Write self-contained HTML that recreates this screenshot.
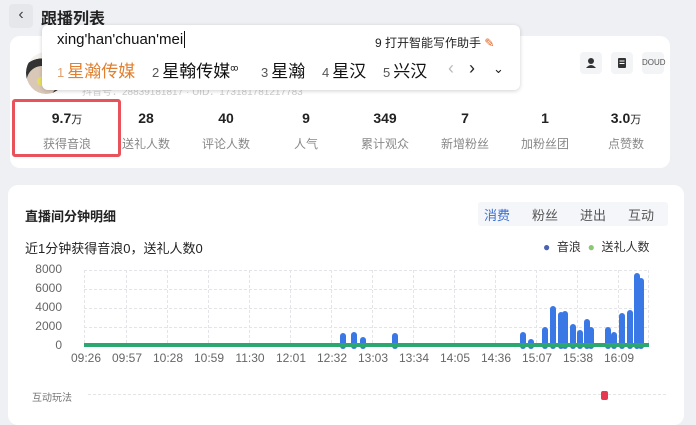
<!DOCTYPE html>
<html><head><meta charset="utf-8"><style>
*{margin:0;padding:0;box-sizing:border-box}
body{width:696px;height:418px;overflow:hidden;background:#eef0f4;font-family:"Liberation Sans","Noto Sans CJK SC",sans-serif;position:relative;color:#222}
.abs{position:absolute}
.card{background:#fff;border-radius:10px;position:absolute}
.stat{position:absolute;top:110px;width:80px;text-align:center}
.stat b{display:block;font-size:14px;font-weight:bold;color:#222;height:20px}
.stat b small{font-size:11px;font-weight:normal}
.stat span{display:block;font-size:12px;color:#888;margin-top:5px}
.ic{position:absolute;top:52px;width:22px;height:22px;background:#f3f4f6;border-radius:4px}
.xl{position:absolute;top:351px;font-size:12px;color:#666;width:40px;text-align:center}
.yl{position:absolute;left:24px;width:38px;text-align:right;font-size:12px;color:#666}
.cd{position:absolute;top:57px;font-size:17px;color:#111;white-space:nowrap}
.cd i{font-style:normal;font-size:13px;color:#555;margin-right:3px}
</style></head><body>
<div class="abs" style="left:9px;top:4px;width:24px;height:24px;background:#e5e7eb;border-radius:4px;font-size:16px;text-align:center;line-height:22px;color:#444">‹</div>
<div class="abs" style="left:41px;top:5px;font-size:16px;font-weight:bold;color:#222">跟播列表</div>

<div class="card" style="left:10px;top:36px;width:660px;height:132px"></div>
<div class="abs" style="left:26px;top:52px;width:40px;height:42px;border-radius:50%;background:radial-gradient(circle at 40% 70%,#e8e060 0 12%,#d9c8b8 13% 40%,#333 41% 60%,#f4f0ec 61%)"></div>
<div class="abs" style="left:82px;top:83px;font-size:10px;color:#ccc">抖音号：28839181817 · UID：173181781217783</div>
<div class="ic" style="left:580px"><svg width="22" height="22"><circle cx="11" cy="9" r="3" fill="#333"/><path d="M6 16q5-6 10 0z" fill="#333"/></svg></div>
<div class="ic" style="left:611px"><svg width="22" height="22"><rect x="7" y="6" width="8" height="10" rx="1" fill="#333"/><path d="M8.5 9h5M8.5 11.5h5" stroke="#fff"/></svg></div>
<div class="ic" style="left:642px;font-size:8px;line-height:22px;text-align:center;color:#555">DOUD</div>

<div class="abs" style="left:12px;top:99px;width:109px;height:58px;border:3px solid #e8525a;border-radius:3px"></div>
<div class="stat" style="left:27px"><b>9.7<small>万</small></b><span>获得音浪</span></div>
<div class="stat" style="left:106px"><b>28</b><span>送礼人数</span></div>
<div class="stat" style="left:186px"><b>40</b><span>评论人数</span></div>
<div class="stat" style="left:266px"><b>9</b><span>人气</span></div>
<div class="stat" style="left:345px"><b>349</b><span>累计观众</span></div>
<div class="stat" style="left:425px"><b>7</b><span>新增粉丝</span></div>
<div class="stat" style="left:505px"><b>1</b><span>加粉丝团</span></div>
<div class="stat" style="left:586px"><b>3.0<small>万</small></b><span>点赞数</span></div>

<div class="abs" style="left:42px;top:25px;width:478px;height:65px;background:#fff;border-radius:6px;box-shadow:0 1px 4px rgba(0,0,0,.18)"></div>
<div class="abs" style="left:57px;top:31px;font-size:15px;color:#111">xing'han'chuan'mei<span style="border-left:1px solid #111;margin-left:1px"></span></div>
<div class="abs" style="left:375px;top:34px;font-size:12px;color:#222">9 打开智能写作助手 <span style="color:#e06020">✎</span></div>
<div class="cd" style="left:57px;color:#e08030"><i style="color:#e0a070">1</i>星瀚传媒</div>
<div class="cd" style="left:152px"><i>2</i>星翰传媒<sup style="font-size:8px">ꝏ</sup></div>
<div class="cd" style="left:261px"><i>3</i>星瀚</div>
<div class="cd" style="left:322px"><i>4</i>星汉</div>
<div class="cd" style="left:383px"><i>5</i>兴汉</div>
<div class="abs" style="left:448px;top:58px;font-size:18px;color:#bbb">‹</div>
<div class="abs" style="left:469px;top:58px;font-size:18px;color:#222">›</div>
<div class="abs" style="left:493px;top:61px;font-size:13px;color:#222">⌄</div>

<div class="card" style="left:8px;top:185px;width:676px;height:240px"></div>
<div class="abs" style="left:25px;top:206px;font-size:13px;font-weight:bold;color:#222">直播间分钟明细</div>
<div class="abs" style="left:478px;top:202px;width:190px;height:24px;background:#f4f6fa;border-radius:3px"></div>
<div class="abs" style="left:484px;top:205px;font-size:13px;color:#3a6fd0">消费</div>
<div class="abs" style="left:532px;top:205px;font-size:13px;color:#555">粉丝</div>
<div class="abs" style="left:580px;top:205px;font-size:13px;color:#555">进出</div>
<div class="abs" style="left:628px;top:205px;font-size:13px;color:#555">互动</div>
<div class="abs" style="left:25px;top:238px;font-size:13px;color:#222">近1分钟获得音浪0，送礼人数0</div>
<div class="abs" style="left:543px;top:238px;font-size:12px;color:#333"><span style="color:#4a62b0">●</span>&nbsp; 音浪 &nbsp;<span style="color:#8cc870">●</span>&nbsp; 送礼人数</div>
<div class="yl" style="top:262px">8000</div>
<div class="yl" style="top:281px">6000</div>
<div class="yl" style="top:300px">4000</div>
<div class="yl" style="top:319px">2000</div>
<div class="yl" style="top:338px">0</div>
<svg class="abs" style="left:0;top:0" width="696" height="418">
<g stroke="#e2e4e8" stroke-dasharray="3 2" stroke-width="1">
<line x1="84" y1="270.5" x2="649" y2="270.5"/><line x1="84" y1="289.5" x2="649" y2="289.5"/><line x1="84" y1="308.5" x2="649" y2="308.5"/><line x1="84" y1="327.5" x2="649" y2="327.5"/>
<line x1="84.5" y1="270" x2="84.5" y2="346"/><line x1="126.5" y1="270" x2="126.5" y2="346"/><line x1="167.5" y1="270" x2="167.5" y2="346"/><line x1="208.5" y1="270" x2="208.5" y2="346"/><line x1="249.5" y1="270" x2="249.5" y2="346"/><line x1="290.5" y1="270" x2="290.5" y2="346"/><line x1="331.5" y1="270" x2="331.5" y2="346"/><line x1="372.5" y1="270" x2="372.5" y2="346"/><line x1="413.5" y1="270" x2="413.5" y2="346"/><line x1="454.5" y1="270" x2="454.5" y2="346"/><line x1="495.5" y1="270" x2="495.5" y2="346"/><line x1="536.5" y1="270" x2="536.5" y2="346"/><line x1="577.5" y1="270" x2="577.5" y2="346"/><line x1="618.5" y1="270" x2="618.5" y2="346"/><line x1="648.5" y1="270" x2="648.5" y2="346"/>
<line x1="88" y1="394.5" x2="668" y2="394.5"/>
</g>
<g stroke="#3a78e6" stroke-width="6" stroke-linecap="round">
<line x1="343" y1="346" x2="343" y2="336"/><line x1="354" y1="346" x2="354" y2="335"/><line x1="363" y1="346" x2="363" y2="340"/><line x1="395" y1="346" x2="395" y2="336"/>
<line x1="523" y1="346" x2="523" y2="335"/><line x1="531" y1="346" x2="531" y2="342"/><line x1="545" y1="346" x2="545" y2="330"/><line x1="553" y1="346" x2="553" y2="309"/><line x1="561" y1="346" x2="561" y2="315"/><line x1="565" y1="346" x2="565" y2="314"/><line x1="573" y1="346" x2="573" y2="327"/><line x1="580" y1="346" x2="580" y2="333"/><line x1="587" y1="346" x2="587" y2="322"/><line x1="591" y1="346" x2="591" y2="330"/><line x1="608" y1="346" x2="608" y2="330"/><line x1="614" y1="346" x2="614" y2="335"/><line x1="622" y1="346" x2="622" y2="316"/><line x1="630" y1="346" x2="630" y2="313"/><line x1="637" y1="346" x2="637" y2="276"/><line x1="641" y1="346" x2="641" y2="281"/><line x1="639" y1="320" x2="640" y2="290"/>
</g>
<line x1="84" y1="345" x2="649" y2="345" stroke="#2aa870" stroke-width="4"/>
<rect x="601" y="391" width="7" height="9" rx="2" fill="#e83850"/>
</svg>
<div class="xl" style="left:66px">09:26</div><div class="xl" style="left:107px">09:57</div><div class="xl" style="left:148px">10:28</div><div class="xl" style="left:189px">10:59</div><div class="xl" style="left:230px">11:30</div><div class="xl" style="left:271px">12:01</div><div class="xl" style="left:312px">12:32</div><div class="xl" style="left:353px">13:03</div><div class="xl" style="left:394px">13:34</div><div class="xl" style="left:435px">14:05</div><div class="xl" style="left:476px">14:36</div><div class="xl" style="left:517px">15:07</div><div class="xl" style="left:558px">15:38</div><div class="xl" style="left:599px">16:09</div>
<div class="abs" style="left:32px;top:389px;font-size:10px;color:#777">互动玩法</div>
</body></html>
